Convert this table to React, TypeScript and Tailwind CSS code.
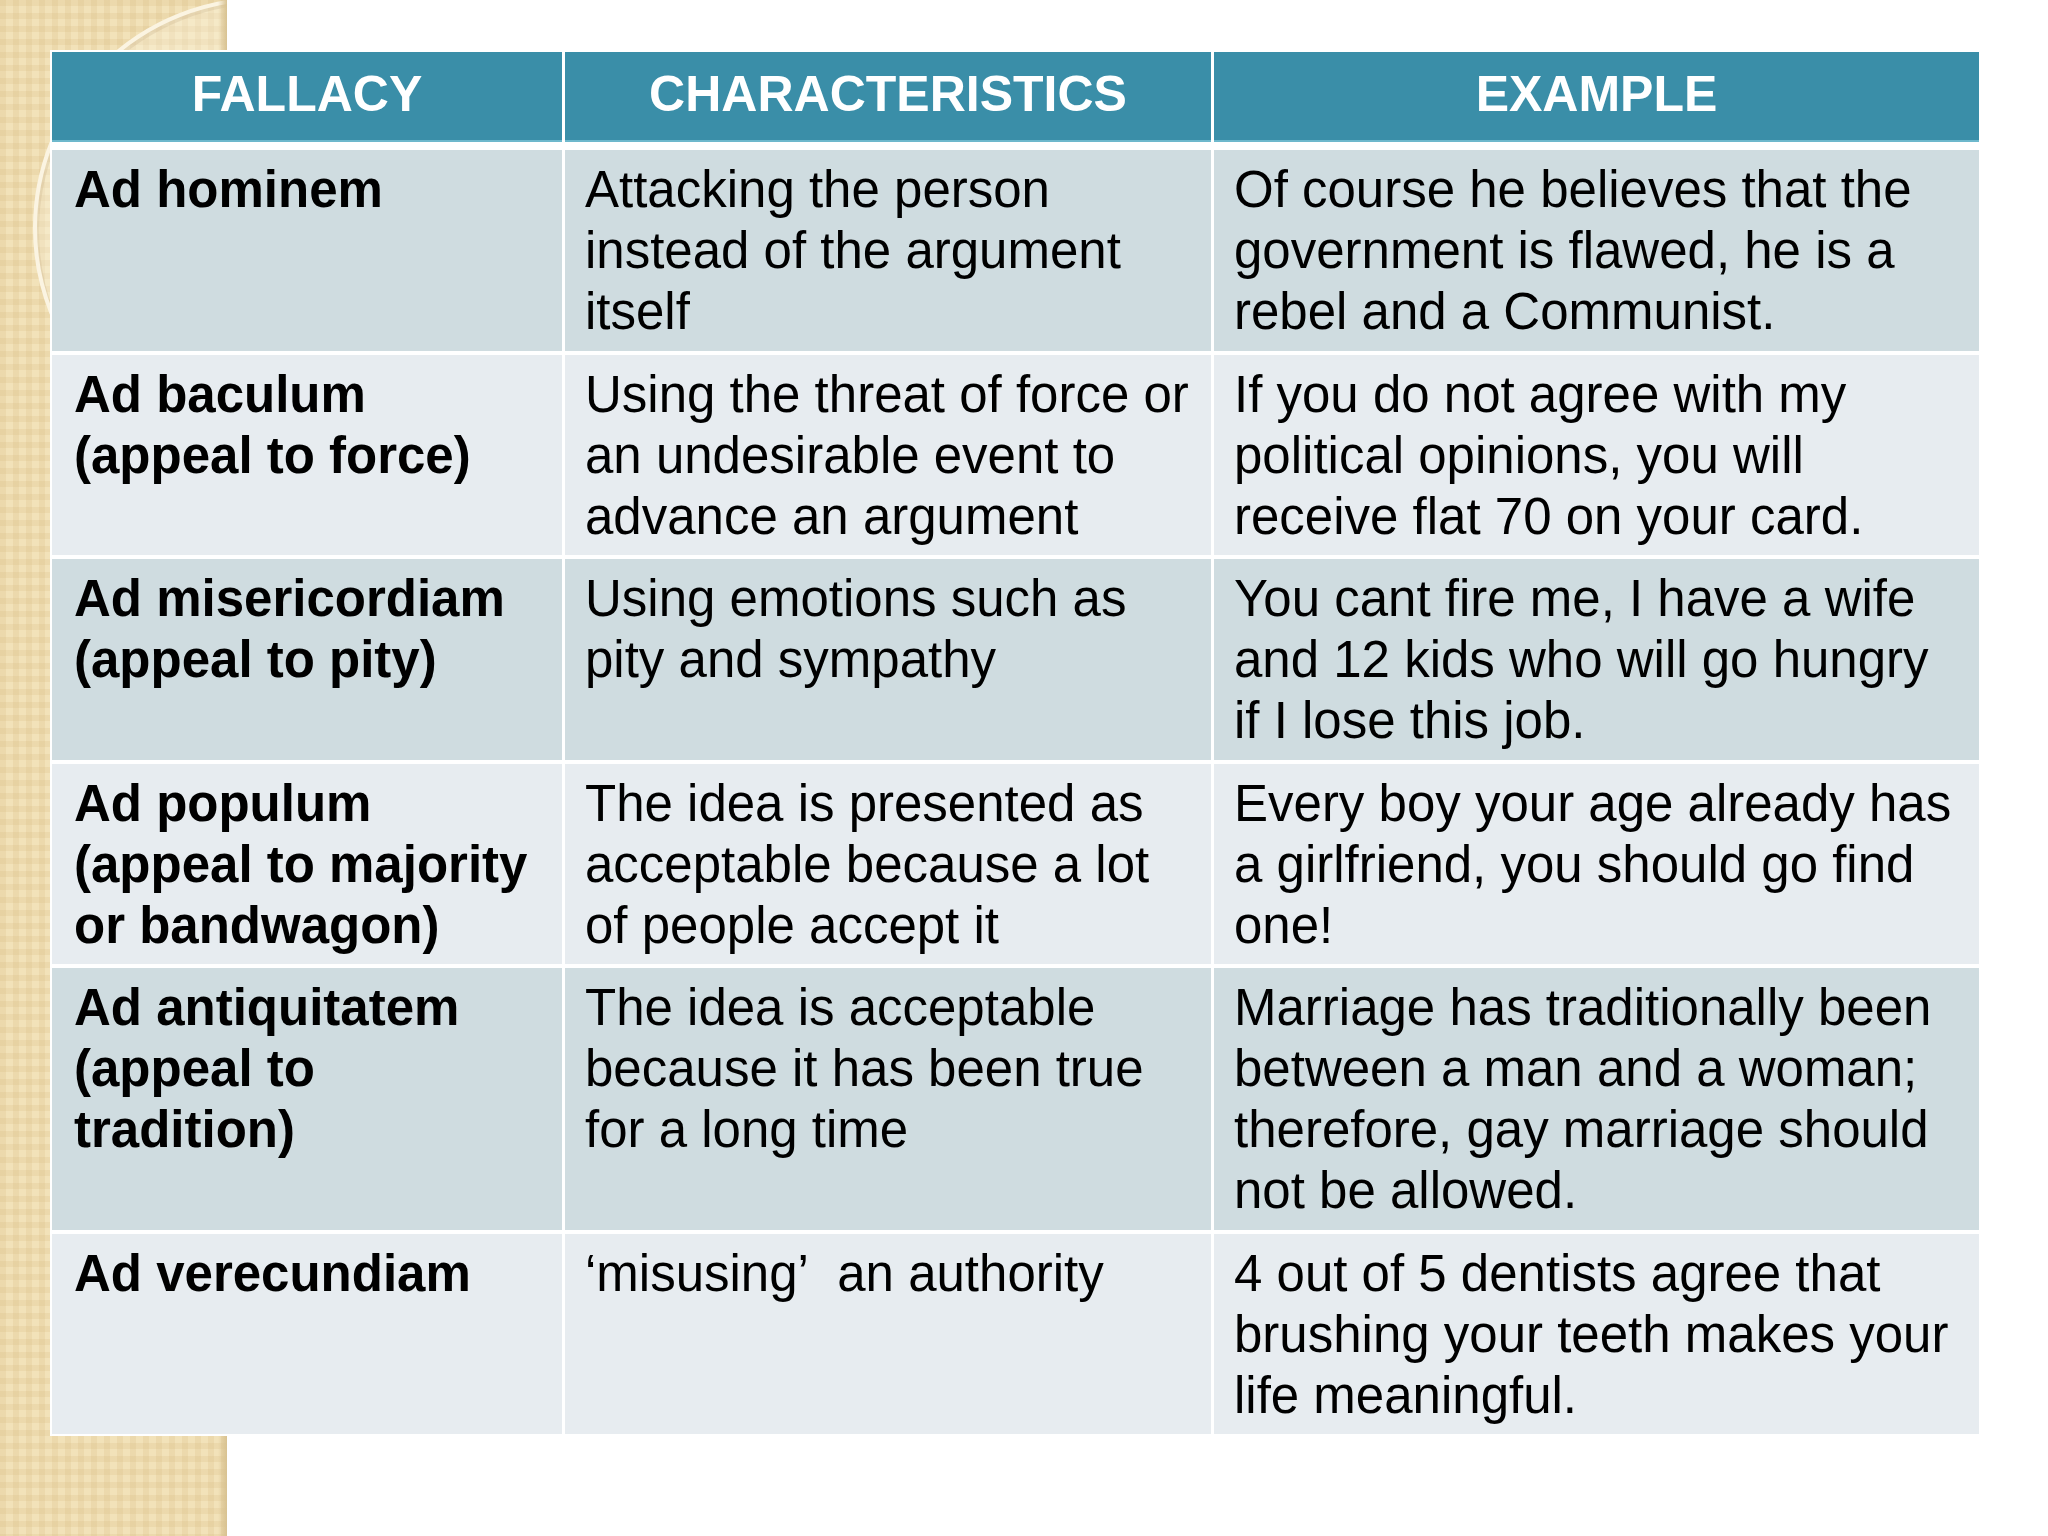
import React from 'react'

type Row = {
  name: string[]
  chars: string
  example: string
}

const rows: Row[] = [
  {
    name: ['Ad hominem'],
    chars: 'Attacking the person instead of the argument itself',
    example:
      'Of course he believes that the government is flawed, he is a rebel and a Communist.',
  },
  {
    name: ['Ad baculum', '(appeal to force)'],
    chars: 'Using the threat of force or an undesirable event to advance an argument',
    example:
      'If you do not agree with my political opinions, you will receive flat 70 on your card.',
  },
  {
    name: ['Ad misericordiam', '(appeal to pity)'],
    chars: 'Using emotions such as pity and sympathy',
    example: 'You cant fire me, I have a wife and 12 kids who will go hungry if I lose this job.',
  },
  {
    name: ['Ad populum', '(appeal to majority', 'or bandwagon)'],
    chars: 'The idea is presented as acceptable because a lot of people accept it',
    example: 'Every boy your age already has a girlfriend, you should go find one!',
  },
  {
    name: ['Ad antiquitatem', '(appeal to', 'tradition)'],
    chars: 'The idea is acceptable because it has been true for a long time',
    example:
      'Marriage has traditionally been between a man and a woman; therefore, gay marriage should not be allowed.',
  },
  {
    name: ['Ad verecundiam'],
    chars: '\u2018misusing\u2019\u00a0 an authority',
    example: '4 out of 5 dentists agree that brushing your teeth makes your life meaningful.',
  },
]

function Backdrop() {
  return (
    <div className="absolute left-0 top-0 h-full w-[227px] overflow-hidden bg-[#f2e2b9] bg-[image:linear-gradient(90deg,rgba(214,186,128,0.22)_50%,transparent_50%),linear-gradient(rgba(214,186,128,0.22)_50%,transparent_50%)] bg-[length:13px_13px]">
      <svg className="absolute left-0 top-0" width="227" height="520" viewBox="0 0 227 520">
        <circle cx="266" cy="231" r="229" fill="none" stroke="rgba(170,140,90,0.25)" strokeWidth="4" />
        <circle cx="264" cy="228" r="229" fill="rgba(255,250,236,0.28)" stroke="#fbf4e2" strokeWidth="4" />
      </svg>
      <div className="absolute right-0 top-0 h-full w-[9px] bg-gradient-to-r from-transparent to-[#d8c291]" />
    </div>
  )
}

function App() {
  return (
    <div className="relative min-h-[1536px] w-[2048px] overflow-hidden bg-white font-['Liberation_Sans',Arial,sans-serif]">
      <Backdrop />
      <div className="relative ml-[50px] mt-[50px] w-[1931px] bg-white p-[2px]">
        <div className="grid grid-cols-[510px_646px_765px] gap-x-[3px]">
          {['FALLACY', 'CHARACTERISTICS', 'EXAMPLE'].map((h) => (
            <div
              key={h}
              className="flex h-[90px] items-center justify-center bg-[#3a8ea8] pb-[5px] text-[50px] font-bold text-white shadow-[inset_0_-2px_0_#6db8cc]"
            >
              {h}
            </div>
          ))}
        </div>
        <div className="mt-[8px] flex flex-col gap-y-[4px]">
          {rows.map((r, i) => {
            const bg = i % 2 === 0 ? 'bg-[#cfdce0]' : 'bg-[#e7ecf0]'
            return (
              <div
                key={i}
                className="grid grid-cols-[510px_646px_765px] gap-x-[3px] text-[51px] leading-[61px] text-black"
              >
                <div className={'pb-[8.5px] pl-[22px] pr-[20px] pt-[9px] font-bold ' + bg}>
                  {r.name.map((l) => (
                    <div key={l}>{l}</div>
                  ))}
                </div>
                <div className={'pb-[8.5px] pl-[20px] pr-[13px] pt-[9px] ' + bg}>{r.chars}</div>
                <div className={'pb-[8.5px] pl-[20px] pr-[20px] pt-[9px] ' + bg}>{r.example}</div>
              </div>
            )
          })}
        </div>
      </div>
    </div>
  )
}

export default App
